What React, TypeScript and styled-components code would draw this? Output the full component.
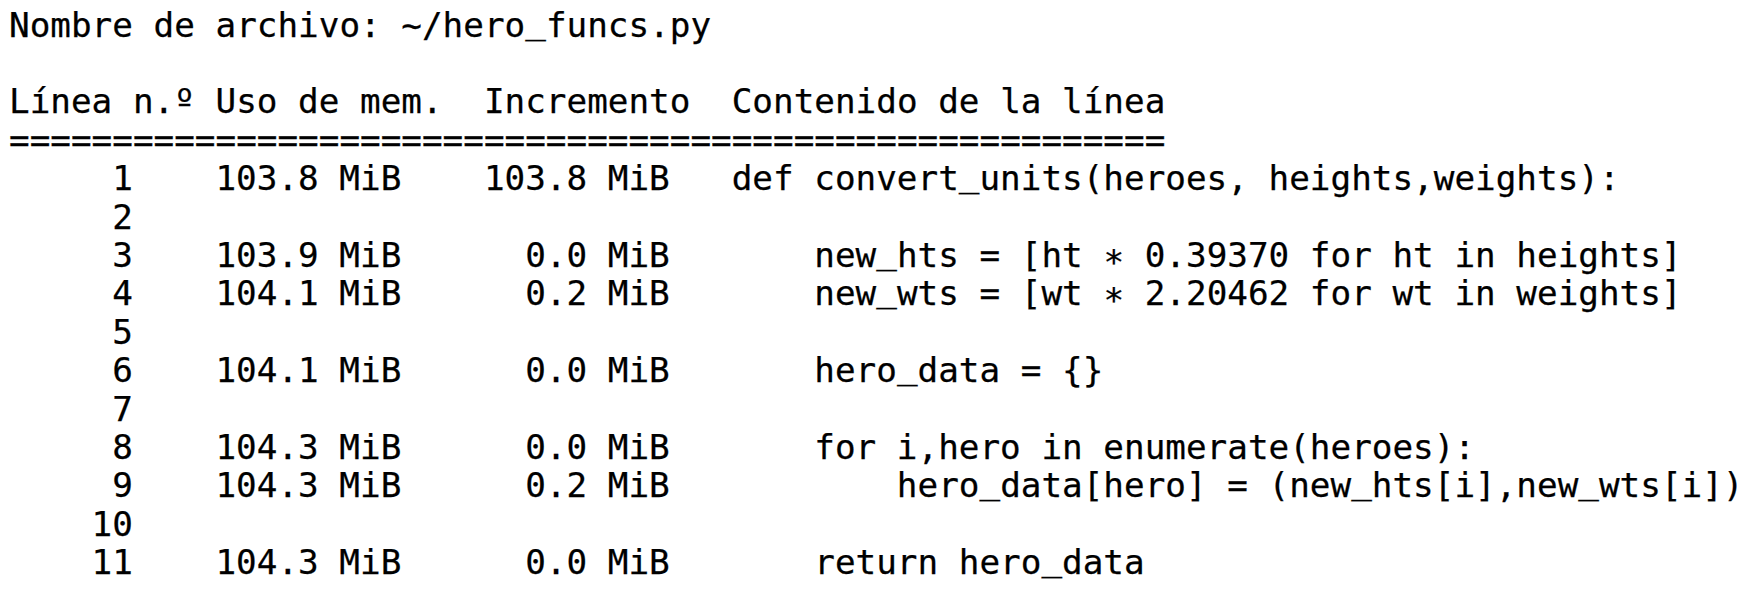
import React from "react";
import styled, { createGlobalStyle } from "styled-components";

const GlobalStyle = createGlobalStyle`
  html, body {
    margin: 0;
    padding: 0;
    background: #ffffff;
  }
`;

const Report = styled.div`
  box-sizing: border-box;
  width: 1747px;
  min-height: 592px;
  padding: 5.6px 0 0 9px;
  font-family: "DejaVu Sans Mono", "Liberation Mono", monospace;
  font-size: 34.3px;
  line-height: 38.4px;
  color: #000000;
  background: #ffffff;
  -webkit-text-stroke: 0.25px #000000;
`;

const TextLine = styled.div`
  white-space: pre;
  height: 38.4px;
`;

const Row = styled.div`
  display: grid;
  grid-template-columns: 6ch 13ch 13ch auto;
  height: 38.4px;
  white-space: pre;
`;

const NumCell = styled.span`
  text-align: right;
`;

const CodeCell = styled.span<{ $indent: number }>`
  padding-left: ${(p) => 3 + p.$indent}ch;
`;

/* Menlo-like glyph placement: underscore sits higher, asterisk is centred */
const Shifted = styled.span<{ $dy: number }>`
  display: inline-block;
  line-height: 0.7;
  transform: translateY(${(p) => p.$dy}px);
`;

const shifts: Record<string, number> = { _: -4, "*": 7 };

function Mono({ text }: { text: string }) {
  const parts = text.split(/([_*])/);
  return (
    <>
      {parts.map((p, i) =>
        p in shifts ? (
          <Shifted key={i} $dy={shifts[p]}>
            {p}
          </Shifted>
        ) : (
          <React.Fragment key={i}>{p}</React.Fragment>
        )
      )}
    </>
  );
}

type Entry = {
  n: number;
  mem?: string;
  inc?: string;
  indent?: number;
  code?: string;
};

const rows: Entry[] = [
  { n: 1, mem: "103.8 MiB", inc: "103.8 MiB", indent: 0, code: "def convert_units(heroes, heights,weights):" },
  { n: 2 },
  { n: 3, mem: "103.9 MiB", inc: "0.0 MiB", indent: 4, code: "new_hts = [ht * 0.39370 for ht in heights]" },
  { n: 4, mem: "104.1 MiB", inc: "0.2 MiB", indent: 4, code: "new_wts = [wt * 2.20462 for wt in weights]" },
  { n: 5 },
  { n: 6, mem: "104.1 MiB", inc: "0.0 MiB", indent: 4, code: "hero_data = {}" },
  { n: 7 },
  { n: 8, mem: "104.3 MiB", inc: "0.0 MiB", indent: 4, code: "for i,hero in enumerate(heroes):" },
  { n: 9, mem: "104.3 MiB", inc: "0.2 MiB", indent: 8, code: "hero_data[hero] = (new_hts[i],new_wts[i])" },
  { n: 10 },
  { n: 11, mem: "104.3 MiB", inc: "0.0 MiB", indent: 4, code: "return hero_data" },
];

export default function App() {
  return (
    <>
      <GlobalStyle />
      <Report>
        <TextLine>
          <Mono text="Nombre de archivo: ~/hero_funcs.py" />
        </TextLine>
        <TextLine> </TextLine>
        <TextLine>Línea n.º Uso de mem.  Incremento  Contenido de la línea</TextLine>
        <TextLine>{"=".repeat(56)}</TextLine>
        {rows.map((r) => (
          <Row key={r.n}>
            <NumCell>{r.n}</NumCell>
            <NumCell>{r.mem ?? ""}</NumCell>
            <NumCell>{r.inc ?? ""}</NumCell>
            <CodeCell $indent={r.indent ?? 0}>
              <Mono text={r.code ?? ""} />
            </CodeCell>
          </Row>
        ))}
      </Report>
    </>
  );
}
